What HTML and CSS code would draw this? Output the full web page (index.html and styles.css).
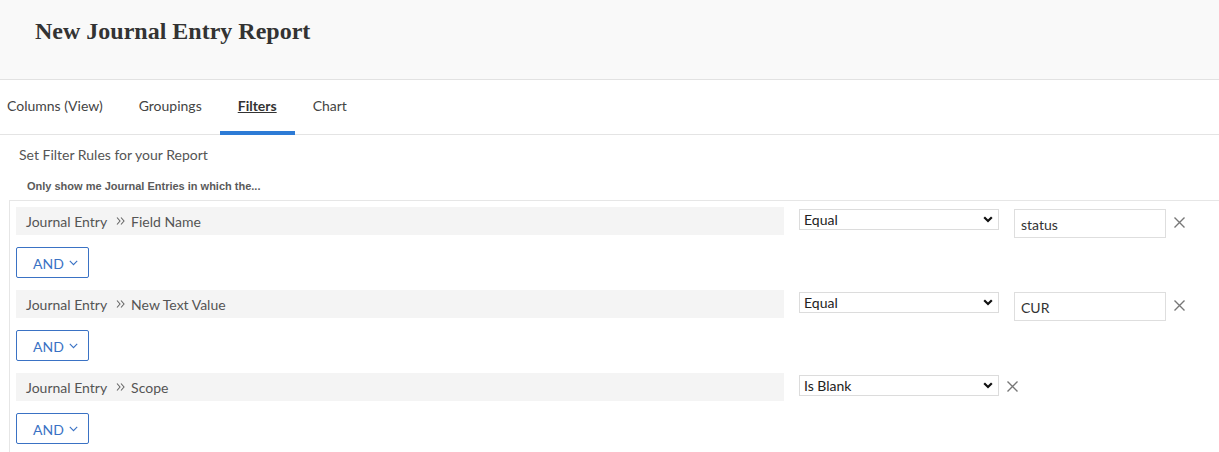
FILE: index.html
```html
<!DOCTYPE html>
<html lang="en">
<head>
<meta charset="utf-8">
<title>New Journal Entry Report</title>
<link rel="stylesheet" href="styles.css">
</head>
<body>
<header class="header">
  <h1 class="title">New Journal Entry Report</h1>
</header>
<nav class="tabs">
  <a class="tab tab-first">Columns (View)</a>
  <a class="tab">Groupings</a>
  <a class="tab tab-active">Filters</a>
  <a class="tab">Chart</a>
</nav>
<main class="content">
  <p class="subtitle">Set Filter Rules for your Report</p>
  <p class="intro">Only show me Journal Entries in which the...</p>
  <section class="filters">
    <div class="rule">
      <div class="field"><span>Journal Entry</span><svg class="crumb" width="9" height="8" viewBox="0 0 9 8"><path d="M1 0.5 L4 4 L1 7.5 M5 0.5 L8 4 L5 7.5" fill="none" stroke="#666" stroke-width="1.1"/></svg><span>Field Name</span></div>
      <div class="select"><span>Equal</span><svg width="10" height="7" viewBox="0 0 10 7"><path d="M1.2 1.2 L5 5 L8.8 1.2" fill="none" stroke="#111" stroke-width="2.2"/></svg></div>
      <div class="input">status</div>
      <svg class="remove" width="11" height="11" viewBox="0 0 11 11"><path d="M0.5 0.5 L10.5 10.5 M10.5 0.5 L0.5 10.5" stroke="#777" stroke-width="1.4"/></svg>
    </div>
    <button class="and"><span>AND</span><svg width="9" height="6" viewBox="0 0 9 6"><path d="M0.8 0.8 L4.5 4.6 L8.2 0.8" fill="none" stroke="#3a72c4" stroke-width="1.1"/></svg></button>

    <div class="rule">
      <div class="field"><span>Journal Entry</span><svg class="crumb" width="9" height="8" viewBox="0 0 9 8"><path d="M1 0.5 L4 4 L1 7.5 M5 0.5 L8 4 L5 7.5" fill="none" stroke="#666" stroke-width="1.1"/></svg><span>New Text Value</span></div>
      <div class="select"><span>Equal</span><svg width="10" height="7" viewBox="0 0 10 7"><path d="M1.2 1.2 L5 5 L8.8 1.2" fill="none" stroke="#111" stroke-width="2.2"/></svg></div>
      <div class="input">CUR</div>
      <svg class="remove" width="11" height="11" viewBox="0 0 11 11"><path d="M0.5 0.5 L10.5 10.5 M10.5 0.5 L0.5 10.5" stroke="#777" stroke-width="1.4"/></svg>
    </div>
    <button class="and"><span>AND</span><svg width="9" height="6" viewBox="0 0 9 6"><path d="M0.8 0.8 L4.5 4.6 L8.2 0.8" fill="none" stroke="#3a72c4" stroke-width="1.1"/></svg></button>

    <div class="rule">
      <div class="field"><span>Journal Entry</span><svg class="crumb" width="9" height="8" viewBox="0 0 9 8"><path d="M1 0.5 L4 4 L1 7.5 M5 0.5 L8 4 L5 7.5" fill="none" stroke="#666" stroke-width="1.1"/></svg><span>Scope</span></div>
      <div class="select"><span>Is Blank</span><svg width="10" height="7" viewBox="0 0 10 7"><path d="M1.2 1.2 L5 5 L8.8 1.2" fill="none" stroke="#111" stroke-width="2.2"/></svg></div>
      <svg class="remove remove-tight" width="11" height="11" viewBox="0 0 11 11"><path d="M0.5 0.5 L10.5 10.5 M10.5 0.5 L0.5 10.5" stroke="#777" stroke-width="1.4"/></svg>
    </div>
    <button class="and"><span>AND</span><svg width="9" height="6" viewBox="0 0 9 6"><path d="M0.8 0.8 L4.5 4.6 L8.2 0.8" fill="none" stroke="#3a72c4" stroke-width="1.1"/></svg></button>
  </section>
</main>
</body>
</html>
```

FILE: styles.css
```css
* { box-sizing: border-box; }
html, body { margin: 0; padding: 0; background: #fff; }
body {
  font-family: Lato, "Liberation Sans", Arial, sans-serif;
  font-size: 14px;
  color: #444;
  overflow: hidden;
}
.header {
  height: 80px;
  background: #f9f9f9;
  border-bottom: 1px solid #e2e2e2;
  padding: 17px 0 0 35px;
}
.title {
  margin: 0;
  font-family: "Liberation Serif", "Times New Roman", serif;
  font-weight: bold;
  font-size: 24px;
  line-height: 28px;
  color: #333;
}
.tabs {
  display: flex;
  height: 55px;
  border-bottom: 1px solid #e4e4e4;
}
.tab {
  display: flex;
  align-items: center;
  padding: 0 18px 4px;
  margin-bottom: -1px;
  color: #444;
  cursor: pointer;
}
.tab-first { padding-left: 7px; }
.tab-active {
  font-weight: bold;
  color: #333;
  text-decoration: underline;
  box-shadow: inset 0 -4px 0 #2d7bd6;
}
.subtitle {
  margin: 12px 0 0 19px;
  line-height: 16px;
  color: #555;
}
.intro {
  margin: 16px 0 0 27px;
  font-family: "Liberation Sans", Arial, sans-serif;
  font-size: 11px;
  font-weight: bold;
  line-height: 14px;
  color: #5a5a5a;
}
.filters {
  margin: 7px 0 0 9px;
  border-top: 1px solid #e6e6e6;
  border-left: 1px solid #e6e6e6;
  padding: 6px 0 20px 6px;
}
.rule {
  display: flex;
  align-items: flex-start;
  height: 28px;
}
.field {
  width: 768px;
  height: 28px;
  background: #f4f4f4;
  padding-left: 10px;
  display: flex;
  align-items: center;
  color: #555;
}
.crumb { margin: 0 6px 0 9px; }
.select {
  width: 200px;
  height: 21px;
  margin: 2px 0 0 15px;
  border: 1px solid #dcdcdc;
  padding: 0 5px 0 4px;
  display: flex;
  align-items: center;
  justify-content: space-between;
  color: #222;
}
.input {
  width: 152px;
  height: 29px;
  margin: 2px 0 0 15px;
  border: 1px solid #dedede;
  padding: 2px 0 0 6px;
  display: flex;
  align-items: center;
  color: #333;
}
.remove { margin: 10px 0 0 8px; }
.remove-tight { margin-top: 8px; }
.and {
  display: flex;
  align-items: center;
  gap: 5px;
  width: 73px;
  height: 31px;
  margin: 12px 0;
  padding: 1px 0 0 16px;
  background: #fff;
  border: 1px solid #3a72c4;
  border-radius: 2px;
  color: #3a72c4;
  font-family: inherit;
  font-size: 14px;
}
```
